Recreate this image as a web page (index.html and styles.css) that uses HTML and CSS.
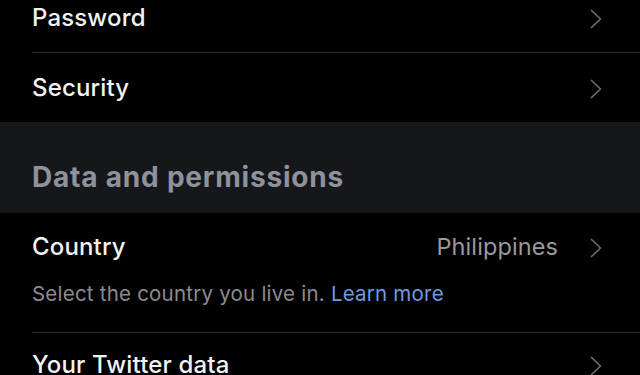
FILE: index.html
```html
<!DOCTYPE html>
<html lang="en">
<head>
  <meta charset="UTF-8"/>
  <meta name="viewport" content="width=device-width, initial-scale=1.0"/>
  <title>Settings</title>
  <link rel="stylesheet" href="styles.css">
</head>
<body>
  <!-- Account rows -->
  <div class="group first-group">
    <div class="row">
      <span class="row-label">Password</span>
      <svg class="chevron" viewBox="0 0 12 20"><path d="M1.5 1.5 L10.5 10 L1.5 18.5"/></svg>
    </div>
    <div class="row">
      <span class="row-label">Security</span>
      <svg class="chevron" viewBox="0 0 12 20"><path d="M1.5 1.5 L10.5 10 L1.5 18.5"/></svg>
    </div>
  </div>

  <!-- Section header -->
  <div class="section-header">Data and permissions</div>

  <div class="group">
    <div class="row row-tall">
      <div class="row-main">
        <span class="row-label">Country</span>
        <span class="row-value">Philippines</span>
        <svg class="chevron" viewBox="0 0 12 20"><path d="M1.5 1.5 L10.5 10 L1.5 18.5"/></svg>
      </div>
      <div class="row-note">Select the country you live in. <a href="#">Learn more</a></div>
    </div>
    <div class="row row-last">
      <span class="row-label">Your Twitter data</span>
      <svg class="chevron" viewBox="0 0 12 20"><path d="M1.5 1.5 L10.5 10 L1.5 18.5"/></svg>
    </div>
  </div>
</body>
</html>
```

FILE: styles.css
```css
/* Colours */
:root {
  --bg: #000;
  --headerBg: #16171b;
  --text: #f2f2f2;
  --muted: #8b8c8f;
  --valueText: #9a9a9c;
  --headerText: #8e929a;
  --link: #6e9be0;
  --line: #2a2a2c;
  --chevron: #6c6d70;
}
body {
  margin: 0;
  background-color: var(--bg);
  color: var(--text);
  font-family: Inter, "Noto Sans", sans-serif;
  overflow: hidden;
}
/* List of rows */
.first-group {
  margin-top: -17px;
}
.row {
  display: flex;
  align-items: center;
  justify-content: space-between;
  height: 69px;
  margin-left: 32px;
  padding-right: 38px;
  border-bottom: 1px solid var(--line);
}
.row:last-child {
  border-bottom: none;
}
.row-last {
  height: 62px;
}
.row-label {
  font-size: 24px;
  font-weight: 500;
  letter-spacing: 0.15px;
}
.chevron {
  width: 12px;
  height: 20px;
  margin-top: 3px;
  fill: none;
  stroke: var(--chevron);
  stroke-width: 1.7;
  stroke-linecap: round;
  stroke-linejoin: round;
  flex-shrink: 0;
}
/* Country row with note under it */
.row-tall {
  flex-direction: column;
  align-items: stretch;
  justify-content: flex-start;
  height: auto;
  padding-top: 19px;
  padding-bottom: 26px;
}
.row-main {
  display: flex;
  align-items: center;
}
.row-main .row-label {
  flex: 1;
}
.row-value {
  font-size: 23.5px;
  color: var(--valueText);
  letter-spacing: 0.1px;
  margin-right: 32px;
}
.row-note {
  margin-top: 20px;
  font-size: 20.5px;
  letter-spacing: 0.22px;
  color: var(--muted);
}
.row-note a {
  color: var(--link);
  text-decoration: none;
}
/* Grey section header */
.section-header {
  background-color: var(--headerBg);
  height: 91px;
  padding-left: 32px;
  padding-top: 38px;
  box-sizing: border-box;
  font-size: 28px;
  font-weight: 700;
  letter-spacing: 0.8px;
  color: var(--headerText);
}
```
